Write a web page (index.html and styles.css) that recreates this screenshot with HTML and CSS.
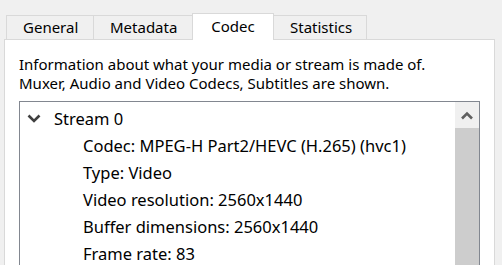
FILE: index.html
```html
<!DOCTYPE html>
<html>
<head>
<meta charset="utf-8">
<link rel="stylesheet" href="styles.css">
</head>
<body>
<div class="tabbar">
  <div class="tab">General</div>
  <div class="tab">Metadata</div>
  <div class="tab active">Codec</div>
  <div class="tab">Statistics</div>
</div>
<div class="panel">
  <p class="intro">Information about what your media or stream is made of.<br>Muxer, Audio and Video Codecs, Subtitles are shown.</p>
  <div class="tree">
    <div class="tree-items">
      <div class="row parent">
        <svg class="chev" width="14" height="9" viewBox="0 0 14 9"><path d="M1.5 1.5 L7 7 L12.5 1.5" fill="none" stroke="#404040" stroke-width="2.6"/></svg>
        <span>Stream 0</span>
      </div>
      <div class="row child">Codec: MPEG-H Part2/HEVC (H.265) (hvc1)</div>
      <div class="row child">Type: Video</div>
      <div class="row child">Video resolution: 2560x1440</div>
      <div class="row child">Buffer dimensions: 2560x1440</div>
      <div class="row child">Frame rate: 83</div>
    </div>
    <div class="scrollbar">
      <div class="sb-btn"><svg width="14" height="9" viewBox="0 0 14 9"><path d="M2 7.5 L7 2.5 L12 7.5" fill="none" stroke="#606060" stroke-width="2.6"/></svg></div>
      <div class="sb-thumb"></div>
    </div>
  </div>
</div>
</body>
</html>
```
FILE: styles.css
```css
html, body {
  margin: 0;
  padding: 0;
  background: #f0f0f0;
  overflow: hidden;
  height: 265px;
}
body {
  font-family: "Noto Sans", "Open Sans", sans-serif;
  font-size: 15px;
  color: #000;
}
.tabbar {
  display: flex;
  align-items: flex-end;
  height: 39px;
  padding-left: 6px;
}
.tab {
  box-sizing: border-box;
  height: 24px;
  border: 1px solid #d9d9d9;
  border-bottom: none;
  margin-right: -1px;
  padding: 0 16px;
  line-height: 23px;
  text-align: center;
  background: #f0f0f0;
}
.tab:nth-child(1) { width: 88px; }
.tab:nth-child(2) { width: 100px; }
.tab:nth-child(3) { width: 82px; }
.tab:nth-child(4) { width: 94px; }
.tab.active {
  position: relative;
  z-index: 1;
  height: 27px;
  margin-bottom: -1px;
  background: #fff;
  line-height: 25px;
}
.panel {
  box-sizing: border-box;
  margin-left: 4px;
  width: 491px;
  height: 240px;
  border: 1px solid #d9d9d9;
  background: #fff;
  padding: 15px 14px 0 14px;
}
.intro {
  margin: 0;
  line-height: 19px;
}
.tree {
  display: flex;
  margin-top: 8px;
  width: 461px;
  height: 200px;
  box-sizing: border-box;
  border: 1px solid #828790;
  background: #fff;
  font-size: 16.5px;
}
.tree-items {
  flex: 1;
  padding-top: 3px;
}
.row {
  height: 27px;
  line-height: 27px;
  white-space: nowrap;
}
.parent {
  display: flex;
  align-items: center;
}
.chev {
  margin-left: 7px;
  margin-right: 13px;
}
.child {
  padding-left: 63px;
}
.scrollbar {
  width: 24px;
  display: flex;
  flex-direction: column;
  background: #f0f0f0;
}
.sb-btn {
  height: 26px;
  display: flex;
  align-items: center;
  justify-content: center;
}
.sb-thumb {
  flex: 1;
  background: #cdcdcd;
}
```
